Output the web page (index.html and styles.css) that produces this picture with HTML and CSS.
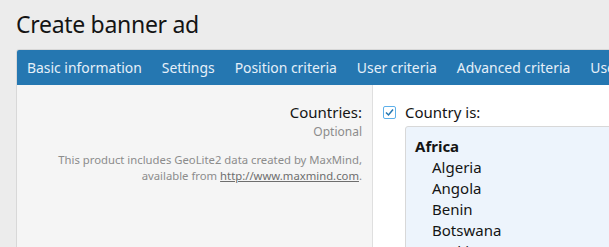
FILE: index.html
```html
<!DOCTYPE html>
<html lang="en">
<head>
    <meta charset="UTF-8">
    <title>Create banner ad</title>
    <link rel="stylesheet" href="styles.css">
</head>
<body>
    <h1 class="page-title">Create banner ad</h1>

    <div class="block">
        <div class="tabs">
            <span class="tab">Basic information</span>
            <span class="tab">Settings</span>
            <span class="tab">Position criteria</span>
            <span class="tab">User criteria</span>
            <span class="tab">Advanced criteria</span>
            <span class="tab">User field criteria</span>
        </div>

        <div class="form-row">
            <div class="form-label">
                <div class="label-main">Countries:</div>
                <div class="label-hint">Optional</div>
                <div class="label-explain">This product includes GeoLite2 data created by MaxMind, available from <a href="#">http://www.maxmind.com</a>.</div>
            </div>
            <div class="form-input">
                <label class="check">
                    <span class="check-box">
                        <svg width="11" height="11" viewBox="0 0 11 11"><path d="M2 5.5 L4.5 8 L9 2.5" fill="none" stroke="#2577b1" stroke-width="1.5"/></svg>
                    </span>
                    Country is:
                </label>
                <div class="select-list">
                    <div class="group">Africa</div>
                    <div class="option">Algeria</div>
                    <div class="option">Angola</div>
                    <div class="option">Benin</div>
                    <div class="option">Botswana</div>
                    <div class="option">Burkina Faso</div>
                </div>
            </div>
        </div>
    </div>
</body>
</html>
```

FILE: styles.css
```css
body {
    margin: 0;
    padding: 0 0 0 16px;
    background-color: #ececec;
    font-family: 'Noto Sans', 'Open Sans', sans-serif;
    color: #141414;
    overflow: hidden;
    height: 247px;
}

.page-title {
    margin: 0;
    padding-top: 8px;
    height: 41px;
    font-size: 23px;
    font-weight: 400;
    line-height: 32px;
    letter-spacing: -0.3px;
}

.block {
    border: 1px solid #d8d8d8;
    border-radius: 3px 0 0 0;
    width: 1000px;
    background-color: #fff;
}

.tabs {
    display: flex;
    height: 35px;
    align-items: center;
    background-color: #2577b1;
    border-radius: 2px 0 0 0;
}

.tab {
    padding: 0 10px;
    color: #e5f0f9;
    font-size: 13.9px;
    white-space: nowrap;
}

.form-row {
    display: grid;
    grid-template-columns: 356px 1fr;
}

.form-label {
    background-color: #f5f5f5;
    border-right: 1px solid #dfdfdf;
    padding: 16px 10px 0 0;
    text-align: right;
    height: 200px;
}

.label-main {
    font-size: 15px;
    line-height: 22px;
}

.label-hint {
    font-size: 12px;
    color: #8c8c8c;
    line-height: 18px;
}

.label-explain {
    margin-top: 11px;
    font-size: 11.3px;
    line-height: 16px;
    color: #8c8c8c;
}

.label-explain a {
    color: #6e6e6e;
}

.form-input {
    padding: 16px 0 0 10px;
}

.check {
    display: flex;
    align-items: center;
    gap: 9px;
    font-size: 15px;
    line-height: 22px;
}

.check-box {
    display: flex;
    align-items: center;
    justify-content: center;
    width: 11px;
    height: 11px;
    border: 1px solid #5eb0ea;
    border-radius: 2px;
    background-color: #fff;
}

.select-list {
    margin: 3px 0 0 22px;
    padding: 9px 9px 6px;
    background-color: #edf4fc;
    border: 1px solid #d8d8d8;
    border-radius: 3px;
    font-size: 15px;
    line-height: 21px;
}

.group {
    font-weight: 700;
}

.option {
    padding-left: 17px;
}
```
